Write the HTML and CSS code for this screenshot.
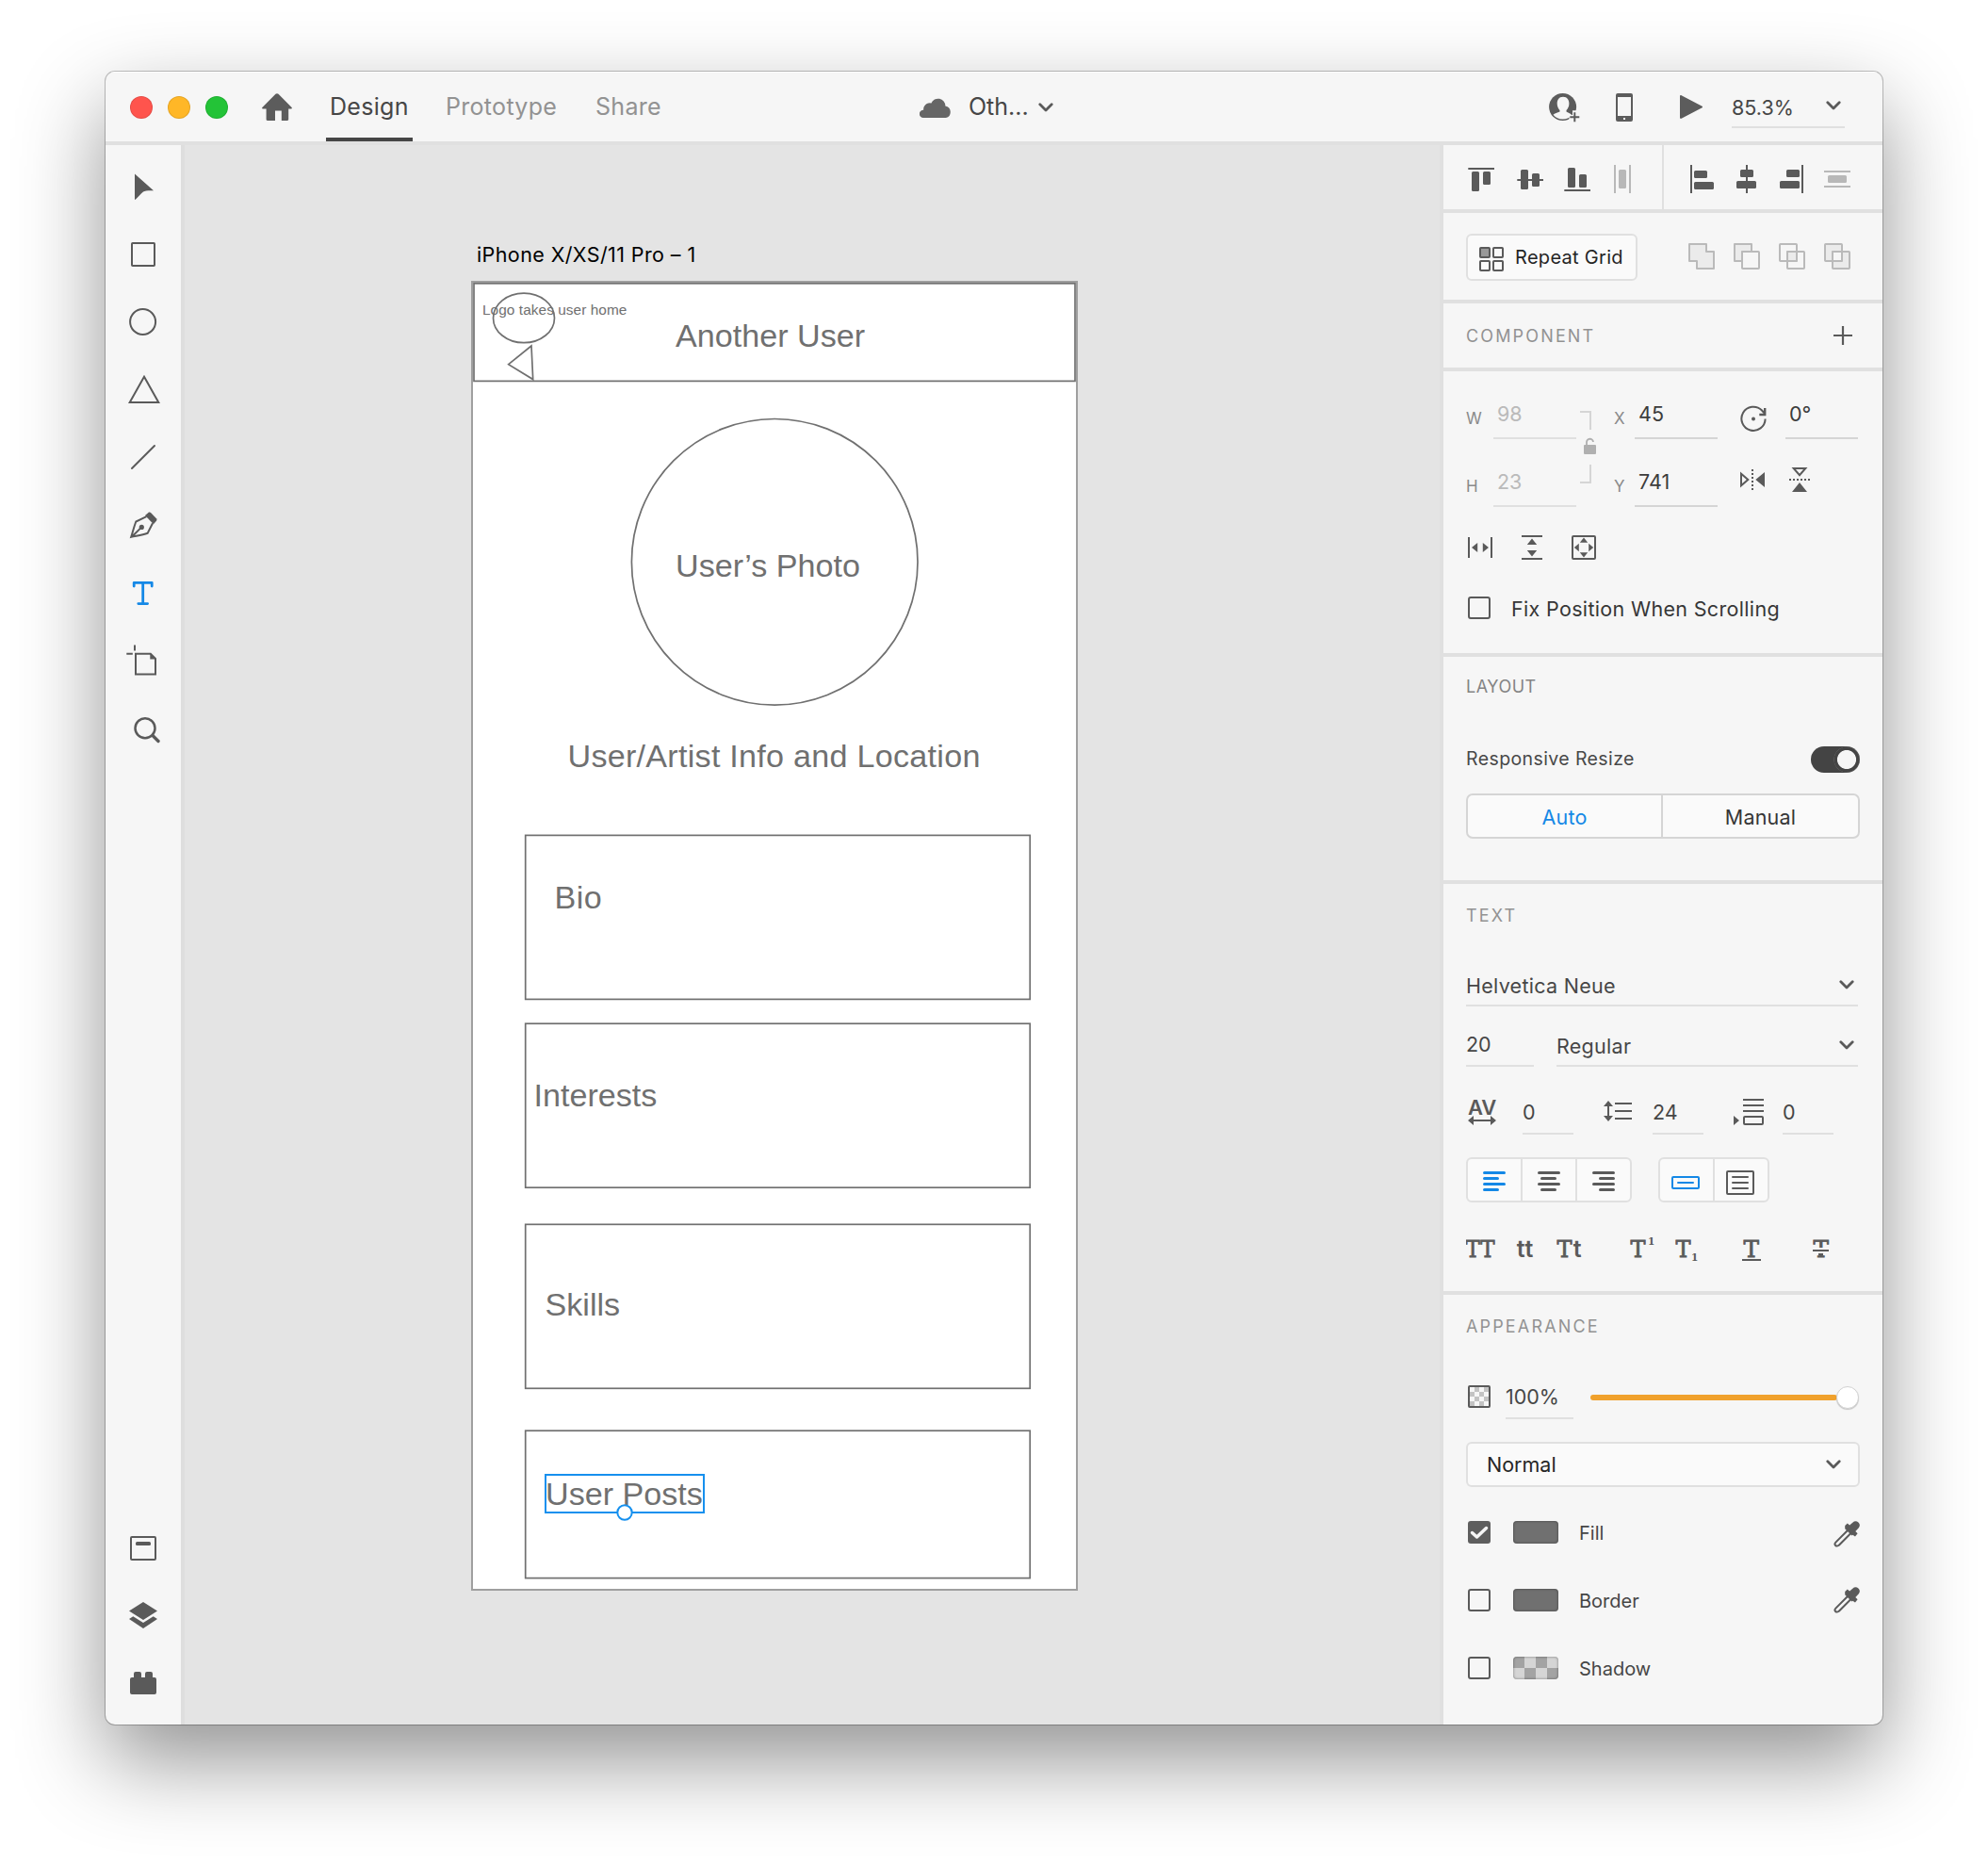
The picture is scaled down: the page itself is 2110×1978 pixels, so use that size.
FILE: index.html
```html
<!DOCTYPE html>
<html lang="en">
<head>
<meta charset="utf-8">
<title>Design</title>
<link rel="stylesheet" href="styles.css">
</head>
<body>
<svg class="defs" width="0" height="0" aria-hidden="true">
  <symbol id="chevron" viewBox="0 0 16 10"><path d="M1.800 1.800 8 7.900 14.200 1.800" fill="none" stroke="currentColor" stroke-width="2.800" stroke-linecap="round" stroke-linejoin="round"/></symbol>
  <symbol id="dropper" viewBox="0 0 28 28">
    <path d="M15.500 9.500 2.600 22.400c-1.200 1.200-1.400 2.700-.5 3.600s2.700.8 3.700-.3L18.700 12.700" fill="none" stroke="currentColor" stroke-width="2"/>
    <path d="M12.200 4.900 14.800 2.500 17.100 4.600 20.600 1.400C22-.1 24.600-.3 26.400 1.400c1.900 1.700 1.900 4.500.2 6.200L23.300 10.900 25.600 13.200 23 16.400 20.400 14.800 19.500 15.400 12.200 8.300z" fill="currentColor"/>
  </symbol>
</svg>
<main class="window">
  <header class="titlebar">
    <div class="lights"><i class="light red"></i><i class="light yellow"></i><i class="light green"></i></div>
    <svg class="home" width="32" height="30" viewBox="0 0 32 30"><path d="M14.500.8c.8-.8 2.200-.8 3 0L31.600 15c.6.600.2 1.500-.6 1.500h-2.800v11.300c0 .700-.5 1.200-1.200 1.200h-6.200V18.500h-6.800V29H5.800c-.7 0-1.200-.5-1.200-1.200V16.500H1c-.8 0-1.200-.9-.6-1.500z" fill="#5c5c5c"/></svg>
    <nav class="modes"><a class="mode active">Design</a><a class="mode prototype">Prototype</a><a class="mode share">Share</a></nav>
    <div class="document">
      <svg width="34" height="22" viewBox="0 0 34 22"><path d="M4 22a4 4 0 0 1 0-8.300h.2A6.600 6.600 0 0 1 12.400 6.500 7.800 7.800 0 0 1 27.400 9.500 6.400 6.400 0 0 1 28 22z" fill="#666"/></svg>
      <span class="docname">Oth...</span>
      <svg class="chev" width="16" height="10"><use href="#chevron"/></svg>
    </div>
    <div class="actions">
      <svg class="invite" width="33" height="31" viewBox="0 0 33 31">
        <circle cx="14.600" cy="14.500" r="14.500" fill="#5c5c5c"/>
        <path d="M15 3.800C10.500 3.800 8.700 7.300 8.700 11c0 3 1.400 5.500 2.800 7v1.600C9 20.600 6 21.500 4.500 22.800A13 13 0 0 0 14.700 27.600 13 13 0 0 0 24.300 23c-1.300-1.500-4.300-2.500-5.800-3.500V18c1.500-1.500 2.900-4 2.900-7C21.400 7.300 19.500 3.800 15 3.800z" fill="#f6f6f6"/>
        <path d="M25 18.200H30V23H33V31H22.500L21.500 27V23H25z" fill="#f6f6f6"/>
        <path d="M27.300 20.300V30.300M22.300 25.300H32.300" stroke="#5c5c5c" stroke-width="2" fill="none"/>
      </svg>
      <svg class="phone" width="18" height="30" viewBox="0 0 18 30"><path fill-rule="evenodd" d="M2 0h14a2 2 0 0 1 2 2v26a2 2 0 0 1-2 2H2a2 2 0 0 1-2-2V2A2 2 0 0 1 2 0zM2 4v20h14V4zM8 26v2h2v-2z" fill="#5c5c5c"/></svg>
      <svg class="play" width="24" height="25" viewBox="0 0 24 25"><path d="M0 1.200C0 .2.800-.2 1.600.2L23.600 11.800c.6.300.6 1.100 0 1.400L1.600 24.800c-.8.400-1.600 0-1.600-1z" fill="#5c5c5c"/></svg>
      <div class="zoom"><span>85.3%</span><svg class="chev" width="16" height="10"><use href="#chevron"/></svg></div>
    </div>
  </header>

  <div class="workspace">
    <aside class="tools">
      <svg viewBox="0 0 80 72"><path d="M31 22.500 51 40.200C45.500 40 42 40.200 40 41.500 37.500 43.500 34.500 47 31.500 50L31 49.500z" class="solid"/></svg>
      <svg viewBox="0 0 80 72"><rect x="28" y="24" width="24" height="24" rx=".8" class="line"/></svg>
      <svg viewBox="0 0 80 72"><circle cx="39.600" cy="35.500" r="13.500" class="line"/></svg>
      <svg viewBox="0 0 80 72"><path d="M41 21.800 56.300 49H25.700z" class="line"/></svg>
      <svg viewBox="0 0 80 72"><path d="M28 47 52 23" class="line round"/></svg>
      <svg viewBox="0 0 80 72"><path d="M43.500 26.200 32.300 31.500C30 37.500 29 42.500 27.200 47.800 33 46.500 39 46 44.700 43.700L50 33.300M27.500 48 38.300 37.400" class="line"/><circle cx="38.300" cy="37.400" r="2.600" class="solid"/><path d="M46 21.600Q47 21 48 22L54 28.300Q55 29.500 54 30.700L50.900 34.200 42 25z" class="solid"/></svg>
      <svg viewBox="0 0 80 72"><path d="M30.200 28V24.300H49.200V28M39.700 24.300V46.600M34.800 46.600H44.600" class="line accent"/></svg>
      <svg viewBox="0 0 80 72"><path d="M47.800 27.800H32V49.500H53V33z" class="line"/><path d="M47.300 27.500 53.500 33.600H47.300zM30 18.500h2v6h-2zM22.300 26.700h6.500v2h-6.500z" class="solid"/></svg>
      <svg viewBox="0 0 80 72"><circle cx="42" cy="34.800" r="10.500" class="line lens"/><path d="M50 42.500 56 48.500" class="line round handle"/></svg>
      <div class="spacer"></div>
      <svg viewBox="0 0 80 72"><rect x="27" y="25" width="26" height="24" rx="1" class="line"/><rect x="32" y="30" width="16" height="4" rx="1.500" class="solid"/></svg>
      <svg viewBox="0 0 80 72"><path d="M40 22 55 31.500 40 41 25 31.500zM25 40 29.300 37.300 40 44 50.700 37.300 55 40 40 50z" class="solid"/></svg>
      <svg viewBox="0 0 80 72"><path d="M28 30h2v-4a2 2 0 0 1 2-2h4a2 2 0 0 1 2 2v4h4v-4a2 2 0 0 1 2-2h4a2 2 0 0 1 2 2v4h2a2 2 0 0 1 2 2v14a2 2 0 0 1-2 2H28a2 2 0 0 1-2-2V32a2 2 0 0 1 2-2z" class="solid"/></svg>
    </aside>

    <section class="canvas">
      <h2 class="artboard-name">iPhone X/XS/11 Pro – 1</h2>
      <svg class="artboard" width="644" height="1390" viewBox="500 298 644 1390">
        <rect x="501" y="299" width="642" height="1388" fill="#fff" stroke="#9f9f9f" stroke-width="2"/>
        <g fill="none" stroke="#707070" stroke-width="1.700">
          <rect x="503" y="300.800" width="638" height="103.600"/>
          <ellipse cx="556" cy="337.400" rx="32.500" ry="26.300"/>
          <path d="M564 367 539.700 386.700 565.700 402.600z"/>
          <circle cx="822.200" cy="596.300" r="151.800"/>
          <rect x="557.700" y="886.400" width="535.500" height="174"/>
          <rect x="557.700" y="1086.200" width="535.500" height="174"/>
          <rect x="557.700" y="1299.300" width="535.500" height="174"/>
          <rect x="557.700" y="1518.200" width="535.500" height="156.400"/>
        </g>
        <g class="wire">
          <text x="512" y="334" class="small">Logo takes user home</text>
          <text x="717" y="368">Another User</text>
          <text x="717" y="611.500">User’s Photo</text>
          <text x="602.500" y="814" class="info">User/Artist Info and Location</text>
          <text x="588.500" y="964" class="bio">Bio</text>
          <text x="566.500" y="1174">Interests</text>
          <text x="578.500" y="1396">Skills</text>
          <text x="579" y="1597">User Posts</text>
        </g>
        <rect x="579" y="1565" width="168" height="40" fill="none" stroke="#1690ee" stroke-width="2"/>
        <circle cx="663" cy="1605" r="7.700" fill="#fff" stroke="#1690ee" stroke-width="2"/>
      </svg>
    </section>

    <aside class="inspector">
      <section class="align">
        <svg width="232" height="68" viewBox="22 94 232 68" class="ic">
          <rect x="48.300" y="118" width="27.700" height="2"/><rect x="52" y="122" width="8" height="21" rx="1.500"/><rect x="64" y="122" width="8" height="14" rx="1.500"/>
          <rect x="100.300" y="130" width="27.700" height="2"/><rect x="104" y="120" width="8" height="21" rx="1.500"/><rect x="116" y="124" width="8" height="14" rx="1.500"/>
          <rect x="150.300" y="141" width="27.700" height="2"/><rect x="154" y="118" width="8" height="21" rx="1.500"/><rect x="166" y="125" width="8" height="14" rx="1.500"/>
          <g class="off"><rect x="203" y="115" width="2" height="30"/><rect x="219" y="115" width="2" height="30"/><rect x="208" y="120" width="8" height="20" rx="1.500"/></g>
        </svg>
        <svg width="232" height="68" viewBox="256 94 232 68" class="ic second">
          <rect x="284" y="115" width="2" height="30"/><rect x="288" y="121" width="14" height="8" rx="1.500"/><rect x="288" y="133" width="21" height="8" rx="1.500"/>
          <rect x="343" y="115" width="2" height="30"/><rect x="337" y="120" width="14" height="8" rx="1.500"/><rect x="333" y="132" width="21" height="8" rx="1.500"/>
          <rect x="402" y="115" width="2" height="30"/><rect x="386" y="120" width="14" height="8" rx="1.500"/><rect x="379" y="132" width="21" height="8" rx="1.500"/>
          <g class="off"><rect x="426" y="121" width="28" height="2"/><rect x="426" y="137" width="28" height="2"/><rect x="430" y="126" width="20" height="8" rx="1.500"/></g>
        </svg>
      </section>

      <section class="repeat">
        <button class="repeat-btn">
          <svg width="26" height="26" viewBox="0 0 26 26" fill="none" stroke="#5a5a5a" stroke-width="2"><rect x="1" y="1" width="10" height="10" rx=".8" fill="#999"/><rect x="15" y="1" width="10" height="10" rx=".8"/><rect x="1" y="15" width="10" height="10" rx=".8"/><rect x="15" y="15" width="10" height="10" rx=".8"/></svg>
          <span>Repeat Grid</span>
        </button>
        <div class="booleans">
          <svg viewBox="0 0 28 28"><path d="M1 1H19V9H27V27H9V19H1z" fill="#ebebeb"/></svg>
          <svg viewBox="0 0 28 28"><path d="M19 9V1H1V19H9V9z" fill="#ebebeb"/><rect x="9" y="9" width="18" height="18" rx=".8" fill="#f6f6f6"/></svg>
          <svg viewBox="0 0 28 28"><rect x="1" y="1" width="18" height="18" rx=".8"/><rect x="9" y="9" width="18" height="18" rx=".8"/><rect x="9" y="9" width="10" height="10" fill="#ebebeb"/></svg>
          <svg viewBox="0 0 28 28"><rect x="1" y="1" width="18" height="18" rx=".8" fill="#ebebeb"/><rect x="9" y="9" width="18" height="18" rx=".8" fill="#ebebeb"/><rect x="9" y="9" width="10" height="10" fill="#f6f6f6"/></svg>
        </div>
      </section>

      <section class="component">
        <h3 class="heading">COMPONENT</h3>
        <svg width="20" height="20" viewBox="0 0 20 20"><path d="M10 0V20M0 10H20" stroke="#5a5a5a" stroke-width="2.200"/></svg>
      </section>

      <section class="transform">
        <div class="geometry">
          <label>W</label><span class="field muted">98</span>
          <svg class="chain" width="41" height="144" viewBox="0 0 41 144"><path d="M4 43H15V62M4 118H15V99" fill="none" stroke="#d5d5d5" stroke-width="2"/><path d="M11 78V75.500a3.500 3.500 0 0 1 7-.5" fill="none" stroke="#b0b0b0" stroke-width="1.800"/><rect x="8" y="78" width="13" height="10" rx="1" fill="#b0b0b0"/></svg>
          <label class="c4">X</label><span class="field c5">45</span>
          <svg class="rot" width="28" height="28" viewBox="0 0 28 28"><path d="M26.600 14.500A12.600 12.600 0 1 1 22.800 5.300L25.500 8.200" fill="none" stroke="#5a5a5a" stroke-width="2"/><path d="M26.200 3V10H20.300" fill="none" stroke="#5a5a5a" stroke-width="2.400"/><circle cx="14" cy="14.500" r="2" fill="#5a5a5a"/></svg>
          <span class="field deg">0°</span>
          <label class="r2">H</label><span class="field muted r2 c2">23</span>
          <label class="r2 c4">Y</label><span class="field r2 c5">741</span>
          <svg class="flips" width="125" height="72" viewBox="0 0 125 72">
            <g fill="none" stroke="#5a5a5a" stroke-width="2"><path d="M1 36.700V49.300L8.300 43z"/><path d="M13 32V54" stroke-dasharray="2 2"/><path d="M56.700 31H69.300L63 38.200z"/><path d="M52 43H74" stroke-dasharray="2 2"/></g>
            <path d="M26 35V51L16.300 43zM55 56H71L63 46z" fill="#5a5a5a"/>
          </svg>
        </div>
        <div class="resize-row ic">
          <svg width="26" height="26" viewBox="0 0 26 26"><path d="M0 2h2v22H0zM24 2h2v22h-2zM4 13 10.200 8V18zM22 13 15.800 8V18z"/></svg>
          <svg width="22" height="26" viewBox="0 0 22 26"><path d="M0 0h22v2H0zM0 24h22v2H0zM11 3.500 16.200 10H5.800zM11 22.500 16.200 16H5.800z"/></svg>
          <svg width="26" height="26" viewBox="0 0 26 26"><rect x="1" y="1" width="24" height="24" rx="1" fill="none" stroke="#5a5a5a" stroke-width="2"/><path d="M13 2.500 17.200 7.800H8.800zM13 23.500 17.200 18.200H8.800zM2.800 13 7.800 8.800V17.200zM23.200 13 18.200 8.800V17.200z"/></svg>
        </div>
        <div class="fix-row"><i class="check"></i><span>Fix Position When Scrolling</span></div>
      </section>

      <section class="layout">
        <h3 class="heading tight">LAYOUT</h3>
        <div class="responsive"><span>Responsive Resize</span><i class="toggle"></i></div>
        <div class="seg"><span class="on">Auto</span><span>Manual</span></div>
      </section>

      <section class="text">
        <h3 class="heading">TEXT</h3>
        <div class="dropdown family"><span>Helvetica Neue</span><svg class="chev" width="16" height="10"><use href="#chevron"/></svg></div>
        <div class="font-row"><div class="dropdown size"><span>20</span></div><div class="dropdown weight"><span>Regular</span><svg class="chev" width="16" height="10"><use href="#chevron"/></svg></div></div>
        <div class="spacing-row">
          <svg width="60" height="48" viewBox="0 0 60 48"><text x="2" y="27" class="av">AV</text><path d="M2 33 8 28V32H26V28L32 33 26 38V34H8V38z" fill="#5a5a5a"/></svg><span class="num">0</span>
          <svg width="84" height="48" viewBox="0 0 84 48"><path d="M37 12 42 18H38V28H42L37 34 32 28H36V18H32zM44 14H62v2H44zM44 22H62v2H44zM44 30H62v2H44z" fill="#5a5a5a"/></svg><span class="num">24</span>
          <svg width="84" height="48" viewBox="0 0 84 48"><path d="M32 28 38 33 32 38zM42 10H64v2H42zM42 16H64v2H42zM42 22H64v2H42z" fill="#5a5a5a"/><rect x="43" y="29" width="20" height="8" rx="1" fill="none" stroke="#5a5a5a" stroke-width="2"/></svg><span class="num">0</span>
        </div>
        <div class="align-row">
          <div class="btns">
            <svg viewBox="0 0 56 44" class="blue"><path d="M17.500 14.500H38.500M17.500 20.500H31.500M17.500 26.500H38.500M17.500 32.500H31.500"/></svg>
            <svg viewBox="0 0 56 44"><path d="M17.500 14.500H38.500M20.500 20.500H34.500M17.500 26.500H38.500M20.500 32.500H34.500"/></svg>
            <svg viewBox="0 0 56 44"><path d="M17.500 14.500H38.500M24.500 20.500H38.500M17.500 26.500H38.500M24.500 32.500H38.500"/></svg>
          </div>
          <div class="btns">
            <svg viewBox="0 0 56 44" class="blue thin"><rect x="13" y="19" width="28" height="12" rx="1"/><path d="M19 25H35"/></svg>
            <svg viewBox="0 0 56 44" class="thin"><rect x="13" y="13" width="28" height="24" rx="1"/><path d="M19 19H35M19 25H35M19 31H35"/></svg>
          </div>
        </div>
        <svg class="case-row" width="418" height="30" viewBox="1556 1310 418 30">
          <text x="1555.500" y="1334" textLength="31" lengthAdjust="spacingAndGlyphs">TT</text>
          <text x="1609.800" y="1334" class="sans">tt</text>
          <text x="1652.500" y="1334" textLength="16" lengthAdjust="spacingAndGlyphs">T</text><text x="1669.800" y="1334" class="sans">t</text>
          <text x="1730.500" y="1334" textLength="16" lengthAdjust="spacingAndGlyphs">T</text><text x="1749" y="1320.500" class="script">1</text>
          <text x="1778.500" y="1334" textLength="16" lengthAdjust="spacingAndGlyphs">T</text><text x="1795" y="1338" class="script">1</text>
          <text x="1850.500" y="1334" textLength="16.500" lengthAdjust="spacingAndGlyphs">T</text><path d="M1849 1336h20v2h-20z"/>
          <text x="1924.500" y="1334" textLength="16.500" lengthAdjust="spacingAndGlyphs">T</text><path d="M1922 1324h21v6h-21z" fill="#f6f6f6"/><path d="M1924 1326h17v2h-17zM1930 1330h5v2h-5z"/>
        </svg>
      </section>

      <section class="appearance">
        <h3 class="heading">APPEARANCE</h3>
        <div class="opacity-row">
          <svg width="24" height="24" viewBox="0 0 24 24"><path d="M7 2h5v5h-5zM17 2h5v5h-5zM2 7h5v5h-5zM12 7h5v5h-5zM7 12h5v5h-5zM17 12h5v5h-5zM2 17h5v5h-5zM12 17h5v5h-5z" fill="#c3c3c3"/><rect x="1" y="1" width="22" height="22" rx="1" fill="none" stroke="#5a5a5a" stroke-width="2"/></svg>
          <span class="num pct">100%</span>
          <div class="slider"><i class="knob"></i></div>
        </div>
        <div class="select"><span>Normal</span><svg class="chev" width="16" height="10"><use href="#chevron"/></svg></div>
        <div class="prop"><i class="check checked"><svg width="24" height="24" viewBox="0 0 24 24"><path d="M4.500 12.500 9.500 17 19.500 7.500" fill="none" stroke="#f5f5f5" stroke-width="3.500" stroke-linecap="round" stroke-linejoin="round"/></svg></i><i class="swatch"></i><span>Fill</span><svg class="drop" width="28" height="28"><use href="#dropper"/></svg></div>
        <div class="prop"><i class="check"></i><i class="swatch"></i><span>Border</span><svg class="drop up" width="28" height="28"><use href="#dropper"/></svg></div>
        <div class="prop"><i class="check"></i><i class="swatch checker"></i><span>Shadow</span></div>
      </section>
    </aside>
  </div>
</main>
</body>
</html>
```
FILE: styles.css
```css
* { box-sizing: border-box; }
body { margin: 0; height: 1978px; padding: 76px 0 0 112px; background: #fff; font-family: Inter, "Liberation Sans", sans-serif; color: #464646; }
.defs { position: absolute; }
svg { display: block; flex: none; }
h2, h3 { margin: 0; font-weight: 400; }
i { display: block; flex: none; }

.window {
  width: 1886px; height: 1754px;
  display: flex; flex-direction: column;
  background: #f6f6f6; border-radius: 10px; overflow: hidden;
  box-shadow: 0 0 0 1px rgba(0,0,0,.24), 0 38px 92px rgba(0,0,0,.43);
}

.titlebar { height: 78px; flex: none; display: flex; align-items: center; padding: 1px 40px 0 26px; border-bottom: 4px solid #e0e0e0; box-shadow: inset 0 1px #fff; }
.lights { display: flex; gap: 16px; }
.light { width: 24px; height: 24px; border-radius: 50%; border: 1px solid rgba(0,0,0,.1); }
.red { background: #ff544d; }
.yellow { background: #ffb727; }
.green { background: #23c337; }
.home { margin-left: 36px; }
.modes { display: flex; height: 73px; margin-left: 36px; font-size: 25px; line-height: 72px; letter-spacing: .3px; color: #929292; }
.mode { padding: 0 0 0 4px; white-space: nowrap; }
.active { width: 92px; color: #464646; border-bottom: 4px solid #464646; }
.prototype { margin-left: 30px; width: 160px; padding-left: 5px; }
.share { width: 100px; }
.document { display: flex; align-items: center; margin-left: 248px; }
.docname { font-size: 25px; line-height: 70px; width: 74px; margin: -2px 0 0 18px; color: #464646; }
.chev { color: #5a5a5a; }
.actions { display: flex; align-items: center; margin-left: auto; }
.invite { margin: 2px -1px 0 0; }
.phone { margin-left: 39px; }
.play { margin-left: 50px; }
.zoom { width: 120px; height: 48px; margin: -3px 0 0 31px; padding: 0 4px 0 0; display: flex; align-items: center; justify-content: space-between; border-bottom: 2px solid #e0e0e0; font-size: 21.5px; }
.zoom span { padding-top: 5px; }
.zoom .chev { margin-top: 2px; }

.workspace { flex: 1; display: flex; min-height: 0; }
.tools { width: 84px; flex: none; display: flex; flex-direction: column; padding: 8px 0; border-right: 4px solid #dedede; }
.tools svg { width: 80px; height: 72px; }
.spacer { flex: 1; }
.line { fill: none; stroke: #5a5a5a; stroke-width: 2; }
.lens { stroke-width: 2.5; }
.handle { stroke-width: 3.4; }
.round { stroke-linecap: round; }
.solid { fill: #5a5a5a; }
.accent { stroke: #1488e6; stroke-width: 2.8; stroke-linecap: round; stroke-linejoin: round; }

.canvas { flex: 1; background: #e4e4e4; padding: 100px 0 0 304px; }
.artboard-name { height: 44px; padding-left: 6px; font-size: 21.5px; line-height: 32px; letter-spacing: .4px; color: #000; white-space: nowrap; }
.wire { font: 34.13px "Liberation Sans", Arial, sans-serif; fill: #707070; }
.small { font-size: 15.4px; letter-spacing: .06px; }
.info { letter-spacing: .26px; }
.bio { letter-spacing: .5px; }

.inspector { width: 470px; flex: none; border-left: 4px solid #e0e0e0; }
.inspector section { border-bottom: 4px solid #e0e0e0; padding: 0 24px; }
.inspector section:last-child { border-bottom: 0; }
.ic { fill: #5a5a5a; }
.off { fill: #b8b8b8; }
.inspector .align { height: 72px; display: flex; padding: 0; }
.second { border-left: 2px solid #e0e0e0; width: 234px; }
.heading { font-size: 18px; line-height: 24px; letter-spacing: 2.15px; color: #929292; white-space: nowrap; }
.tight { letter-spacing: .5px; color: #848484; }

.inspector .repeat { height: 96px; display: flex; justify-content: space-between; padding-top: 22px; }
.repeat-btn { width: 182px; height: 50px; padding: 0 0 0 12px; display: flex; align-items: center; gap: 12px; border: 2px solid #e0e0e0; border-radius: 6px; background: #fafafa; font: 20px Inter, sans-serif; letter-spacing: .3px; color: #242424; white-space: nowrap; }
.repeat-btn svg { margin-top: 4px; }
.booleans { display: flex; gap: 20px; padding: 10px 10px 0 0; }
.booleans svg { width: 28px; height: 28px; fill: none; stroke: #bababa; stroke-width: 2; stroke-linejoin: round; }

.inspector .component { height: 72px; display: flex; align-items: center; justify-content: space-between; padding-right: 32px; }
.component .heading { padding-top: 2px; }

.transform { height: 303px; }
.geometry { display: grid; grid-template: 72px 72px / 29px 88px 41px 21px 88px 24px 48px 77px; }
.geometry label { grid-row: 1; grid-column: 1; padding-top: 38px; font-size: 17px; line-height: 24px; color: #8a8a8a; }
.field { grid-row: 1; grid-column: 2; padding: 29px 0 0 4px; font-size: 21.5px; line-height: 32px; color: #3c3c3c; border-bottom: 2px solid #d5d5d5; }
.muted { color: #bababa; border-color: #e0e0e0; }
.chain { grid-column: 3; grid-row: 1 / 3; }
.rot { grid-row: 1; grid-column: 7; margin-top: 36px; }
.deg { grid-column: 8; }
.geometry .c4 { grid-column: 4; margin-left: -1px; }
.geometry .c5 { grid-column: 5; }
.geometry .r2 { grid-row: 2; }
.flips { grid-column: 7 / 9; grid-row: 2; }
.resize-row { display: flex; padding: 30px 0 0 2px; gap: 31px; }
.fix-row { display: flex; align-items: center; gap: 22px; margin: 37px 0 0 2px; font-size: 21.5px; line-height: 26px; letter-spacing: .33px; color: #363636; white-space: nowrap; }
.fix-row span { padding-top: 2px; margin-bottom: -1px; }
.check { width: 24px; height: 24px; border: 2px solid #5a5a5a; border-radius: 3px; }

.inspector .layout { height: 241px; padding-top: 20px; }
.responsive { display: flex; align-items: center; justify-content: space-between; height: 28px; margin-top: 51px; font-size: 19.5px; letter-spacing: .4px; color: #484848; }
.responsive span { margin-top: -2px; }
.toggle { width: 52px; height: 28px; border-radius: 14px; background: radial-gradient(circle at 38px 14px, #f5f5f5 9.6px, #444 10.4px, #444 13px, #5a5a5a 13.4px, #444 14px); }
.seg { display: flex; height: 48px; margin-top: 22px; border: 2px solid #d5d5d5; border-radius: 7px; background: #fafafa; font-size: 21.5px; line-height: 46px; letter-spacing: .2px; text-align: center; color: #363636; }
.seg span { width: 207px; }
.seg .on { color: #1488e6; border-right: 2px solid #d5d5d5; }

.inspector .text { height: 436px; padding-top: 22px; }
.dropdown { display: flex; align-items: center; justify-content: space-between; height: 46px; padding: 3px 4px 0 0; border-bottom: 2px solid #e0e0e0; font-size: 21.5px; letter-spacing: .28px; white-space: nowrap; }
.dropdown .chev { margin-top: -2px; }
.family { width: 416px; margin-top: 38px; }
.font-row { display: flex; gap: 24px; margin-top: 18px; width: 416px; }
.size { width: 72px; padding-top: 0; letter-spacing: 0; }
.weight { flex: 1; }
.spacing-row { display: flex; margin-top: 24px; }
.av { font: 600 22px Inter, sans-serif; fill: #5a5a5a; }
.num { display: block; width: 54px; height: 48px; border-bottom: 2px solid #e0e0e0; font-size: 21.5px; line-height: 49px; }
.align-row { display: flex; gap: 28px; margin-top: 24px; }
.btns { display: flex; border: 2px solid #e0e0e0; border-radius: 6px; background: #fafafa; }
.btns svg { width: 56px; height: 44px; box-sizing: content-box; fill: none; stroke: #5a5a5a; stroke-width: 3; stroke-linecap: round; }
.btns svg + svg { border-left: 2px solid #e0e0e0; }
.btns .thin { stroke-width: 2; }
.btns .blue { stroke: #1488e6; }
.case-row { margin-top: 34px; fill: #5a5a5a; font: 25px "DejaVu Serif", serif; }
.case-row text { stroke: #5a5a5a; stroke-width: .8px; }
.case-row .sans { font: 600 25px Inter, sans-serif; stroke: none; letter-spacing: .6px; }
.case-row .script { font: 700 10.5px "DejaVu Serif", serif; stroke: none; }

.inspector .appearance { padding-top: 22px; }
.opacity-row { display: flex; align-items: center; height: 48px; margin-top: 38px; padding-left: 2px; }
.pct { width: 72px; margin-left: 16px; }
.slider { width: 262px; height: 6px; margin: 2px 0 0 18px; border-radius: 3px; background: #f0a12c; display: flex; align-items: center; justify-content: flex-end; }
.knob { width: 24px; height: 24px; margin-right: -23px; border-radius: 50%; background: #fff; border: 1px solid #d2d2d2; box-shadow: 0 1px 1px rgba(0,0,0,.2); }
.select { display: flex; align-items: center; justify-content: space-between; height: 48px; margin-top: 24px; padding: 0 18px 0 20px; border: 2px solid #e0e0e0; border-radius: 6px; background: #fafafa; font-size: 21.5px; color: #262626; }
.prop { display: flex; height: 28px; margin-bottom: 44px; padding-left: 2px; font-size: 20px; line-height: 26px; }
.select + .prop { margin-top: 36px; }
.prop .swatch { width: 48px; height: 24px; margin: 0 22px 0 24px; border-radius: 4px; background: #707070; box-shadow: inset 0 0 3px rgba(0,0,0,.45); }
.prop .checker { background: conic-gradient(#d5d5d5 25%, #a3a3a3 0 50%, #d5d5d5 0 75%, #a3a3a3 0) 0 0 / 24px 24px; }
.check.checked { background: #5e5e5e; border: 0; }
.drop { margin-left: auto; color: #5a5a5a; }
.up { margin-top: -2px; }
```
